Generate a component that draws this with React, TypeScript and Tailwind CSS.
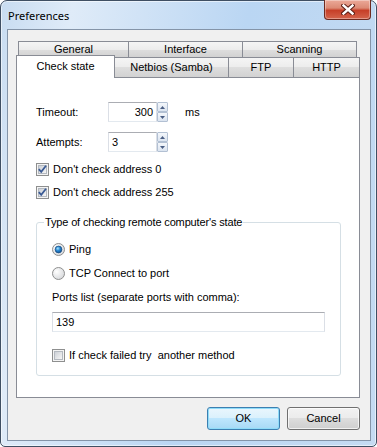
import React from 'react';

const CloseButton: React.FC = () => (
  <div className="-mt-[1px] flex h-[20px] w-[47px] items-center justify-center rounded-b-[4px] border border-t-0 border-[#6e2a20] bg-[linear-gradient(#eba999_0%,#dc8a75_42%,#c63f28_55%,#d4644c_100%)] shadow-[inset_0_0_0_1px_rgba(255,255,255,0.35)]">
    <svg width="14" height="11" viewBox="0 0 14 11">
      <path d="M2.5 1.5 L11.5 9.5 M11.5 1.5 L2.5 9.5" stroke="#5a1d14" strokeWidth="4.4" strokeLinecap="square" />
      <path d="M2.5 1.5 L11.5 9.5 M11.5 1.5 L2.5 9.5" stroke="#ffffff" strokeWidth="2.4" strokeLinecap="square" />
    </svg>
  </div>
);

const Checkbox: React.FC<{ checked?: boolean }> = ({ checked }) => (
  <span className="flex h-[13px] w-[13px] shrink-0 items-center justify-center border border-[#8e8f8f] bg-[#f4f4f4]">
    <span className="flex h-[9px] w-[9px] items-center justify-center border border-[#b4b9c0] bg-[linear-gradient(135deg,#cdd1d7,#f6f6f6)]">
      {checked && (
        <svg width="9" height="9" viewBox="0 0 9 9" className="overflow-visible">
          <polyline points="0.8,4.2 3.2,6.8 8,0.8" fill="none" stroke="#3a5a94" strokeWidth="1.8" />
        </svg>
      )}
    </span>
  </span>
);

const Radio: React.FC<{ checked?: boolean }> = ({ checked }) => (
  <svg width="13" height="13" viewBox="0 0 13 13" className="shrink-0">
    <defs>
      <radialGradient id="radioBg" cx="35%" cy="35%" r="75%">
        <stop offset="0%" stopColor="#ffffff" />
        <stop offset="100%" stopColor="#d4d6d9" />
      </radialGradient>
      <radialGradient id="radioDot" cx="40%" cy="35%" r="70%">
        <stop offset="0%" stopColor="#a9e4fb" />
        <stop offset="45%" stopColor="#2a8ad4" />
        <stop offset="100%" stopColor="#0b4d8f" />
      </radialGradient>
    </defs>
    <circle cx="6.5" cy="6.5" r="6" fill="url(#radioBg)" stroke="#8e8f8f" />
    {checked && <circle cx="6.5" cy="6.5" r="3.4" fill="url(#radioDot)" stroke="#1b4a7e" strokeWidth="0.7" />}
  </svg>
);

const SpinButton: React.FC<{ up?: boolean }> = ({ up }) => (
  <div className="flex h-[10px] w-[11px] items-center justify-center rounded-[1px] border border-[#b2c0d3] bg-[linear-gradient(#f4f7fb,#dbe4f0)]">
    <svg width="5" height="3" viewBox="0 0 5 3">
      <polygon points={up ? '0,3 5,3 2.5,0' : '0,0 5,0 2.5,3'} fill="#4a5e84" />
    </svg>
  </div>
);

const NumberField: React.FC<{ value: string; right?: boolean }> = ({ value, right }) => (
  <div className="flex items-center">
    <div
      className={`flex h-[20px] w-[49px] items-center border border-[#abadb3] border-b-[#e3e9ef] border-x-[#dbdfe6] bg-white px-[3px] ${
        right ? 'justify-end' : 'justify-start'
      }`}
    >
      {value}
    </div>
    <div className="flex flex-col">
      <SpinButton up />
      <SpinButton />
    </div>
  </div>
);

const tabBg = 'bg-[linear-gradient(#f5f5f5_0%,#ececec_50%,#dedede_50%,#d2d2d2_100%)]';

export default function App() {
  return (
    <div className="h-[447px] w-[377px] bg-white font-['Liberation_Sans',Arial,sans-serif] text-[11px] leading-[13px] text-black">
      <div className="flex h-full w-full flex-col rounded-t-[7px] rounded-b-[5px] border border-[#3f4f63] bg-[linear-gradient(100deg,#c8dcf1_0%,#dfebf8_16%,#bad6f3_55%,#c5dbf2_100%)] pb-[5px] pl-[6px] pr-[5px] shadow-[inset_0_0_0_1px_rgba(255,255,255,0.55)]">
        {/* title bar */}
        <div className="flex h-[28px] shrink-0 items-start justify-between">
          <span className="pl-[1px] pt-[7px] font-['Noto_Sans',sans-serif] text-[11px] leading-[16px]">Preferences</span>
          <CloseButton />
        </div>

        {/* client area */}
        <div className="flex flex-1 flex-col border border-[#8494a8] bg-[#f0f0f0] pl-[8px] pr-[10px] pt-[11px]">
          {/* back tab row */}
          <div className="ml-[2px] flex h-[16px]">
            <div className={`flex h-full w-[111px] items-center justify-center border border-b-0 border-[#898c95] ${tabBg}`}>General</div>
            <div className={`-ml-px flex h-full w-[115px] items-center justify-center border border-b-0 border-[#898c95] ${tabBg}`}>Interface</div>
            <div className={`-ml-px flex h-full w-[115px] items-center justify-center border border-b-0 border-[#898c95] ${tabBg}`}>Scanning</div>
          </div>

          {/* front tab row */}
          <div className="flex h-[20px] items-end">
            <div className="relative z-10 -mb-px flex h-[23px] w-[99px] items-start justify-center border border-b-0 border-[#898c95] bg-white pt-[4px]">
              Check state
            </div>
            <div className={`-ml-px flex h-[20px] w-[115px] items-center justify-center border border-b-0 border-[#898c95] ${tabBg}`}>Netbios (Samba)</div>
            <div className={`-ml-px flex h-[20px] w-[66px] items-center justify-center border border-b-0 border-[#898c95] ${tabBg}`}>FTP</div>
            <div className={`-ml-px flex h-[20px] flex-1 items-center justify-center border border-b-0 border-[#898c95] ${tabBg}`}>HTTP</div>
          </div>

          {/* tab page */}
          <div className="flex h-[321px] flex-col border border-[#898c95] bg-white pl-[19px] pt-[24px]">
            <div className="flex h-[20px] items-center">
              <span className="w-[72px]">Timeout:</span>
              <NumberField value="300" right />
              <span className="ml-[17px]">ms</span>
            </div>
            <div className="mt-[10px] flex h-[20px] items-center">
              <span className="w-[72px]">Attempts:</span>
              <NumberField value="3" />
            </div>
            <label className="mt-[11px] flex h-[13px] items-center gap-[4px]">
              <Checkbox checked />
              <span>Don't check address 0</span>
            </label>
            <label className="mt-[10px] flex h-[13px] items-center gap-[4px]">
              <Checkbox checked />
              <span>Don't check address 255</span>
            </label>

            <fieldset className="mt-[17px] w-[305px] rounded-[3px] border border-[#d5dfe5] p-0">
              <legend className="ml-[7px] px-[1px] leading-[13px] tracking-[-0.15px]">Type of checking remote computer's state</legend>
              <div className="flex flex-col px-[15px] pb-[13px] pt-[14px]">
                <label className="flex h-[13px] items-center gap-[4px]">
                  <Radio checked />
                  <span>Ping</span>
                </label>
                <label className="mt-[11px] flex h-[13px] items-center gap-[4px]">
                  <Radio />
                  <span>TCP Connect to port</span>
                </label>
                <span className="mt-[11px] h-[13px]">Ports list (separate ports with comma):</span>
                <div className="mt-[8px] flex h-[20px] items-center border border-[#abadb3] border-b-[#e3e9ef] border-x-[#dbdfe6] bg-white px-[3px]">
                  139
                </div>
                <label className="mt-[17px] flex h-[13px] items-center gap-[4px]">
                  <Checkbox />
                  <span className="whitespace-pre">If check failed try  another method</span>
                </label>
              </div>
            </fieldset>
          </div>

          {/* buttons */}
          <div className="mt-[9px] flex justify-end gap-[7px]">
            <button className="flex h-[23px] w-[73px] items-center justify-center rounded-[3px] border border-[#3c7fb1] bg-[linear-gradient(#eaf6fd_0%,#d9f0fc_50%,#bee6fd_50%,#a7d9f5_100%)] shadow-[inset_0_0_0_1px_#8fdcf9]">
              OK
            </button>
            <button className="flex h-[23px] w-[73px] items-center justify-center rounded-[3px] border border-[#707070] bg-[linear-gradient(#f2f2f2_0%,#ebebeb_50%,#dddddd_50%,#cfcfcf_100%)] shadow-[inset_0_0_0_1px_rgba(255,255,255,0.7)]">
              Cancel
            </button>
          </div>
        </div>
      </div>
    </div>
  );
}
